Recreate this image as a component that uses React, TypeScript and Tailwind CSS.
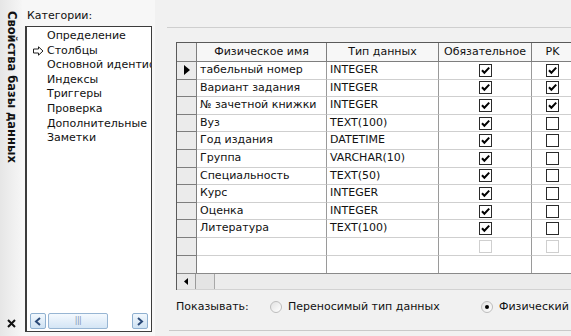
import React from "react";

type Row = { name: string; type: string; req: boolean; pk: boolean };

const rows: Row[] = [
  { name: "табельный номер", type: "INTEGER", req: true, pk: true },
  { name: "Вариант задания", type: "INTEGER", req: true, pk: true },
  { name: "№ зачетной книжки", type: "INTEGER", req: true, pk: true },
  { name: "Вуз", type: "TEXT(100)", req: true, pk: false },
  { name: "Год издания", type: "DATETIME", req: true, pk: false },
  { name: "Группа", type: "VARCHAR(10)", req: true, pk: false },
  { name: "Специальность", type: "TEXT(50)", req: true, pk: false },
  { name: "Курс", type: "INTEGER", req: true, pk: false },
  { name: "Оценка", type: "INTEGER", req: true, pk: false },
  { name: "Литература", type: "TEXT(100)", req: true, pk: false },
];

const categories = [
  "Определение",
  "Столбцы",
  "Основной идентиф",
  "Индексы",
  "Триггеры",
  "Проверка",
  "Дополнительные",
  "Заметки",
];

const cols = "grid grid-cols-[20px_130px_112px_93px_41px]";

function CheckBox({ checked, faint }: { checked?: boolean; faint?: boolean }) {
  return (
    <span
      className={
        "w-[13px] h-[13px] border bg-white flex items-center justify-center " +
        (faint ? "border-[#cfcfcf]" : "border-[#2a2a2a]")
      }
    >
      {checked && (
        <svg width="11" height="11" viewBox="0 0 11 11">
          <path d="M2 5.2 L4.4 7.8 L9.2 2.6" fill="none" stroke="#000" strokeWidth="2" />
        </svg>
      )}
    </span>
  );
}

function Radio({ selected }: { selected?: boolean }) {
  return (
    <span className="w-[12px] h-[12px] rounded-full border border-[#bdbdbd] bg-gradient-to-br from-[#e2e2e2] to-white flex items-center justify-center">
      {selected && <span className="w-[4px] h-[4px] rounded-full bg-black" />}
    </span>
  );
}

function HollowArrow() {
  return (
    <svg width="11" height="10" viewBox="0 0 11 10">
      <path
        d="M0.5 3 H5.5 V0.8 L10 5 L5.5 9.2 V7 H0.5 Z"
        fill="white"
        stroke="#202020"
        strokeWidth="1"
      />
    </svg>
  );
}

function VistaButton({ dir }: { dir: "left" | "right" }) {
  return (
    <div className="w-[16px] h-[16px] rounded-[2px] border border-[#8fb0d0] bg-gradient-to-b from-[#f2f8fd] to-[#cfe2f3] flex items-center justify-center">
      <svg width="8" height="9" viewBox="0 0 8 9">
        <path
          d={dir === "left" ? "M6 1 L2 4.5 L6 8" : "M2 1 L6 4.5 L2 8"}
          fill="none"
          stroke="#2b4a78"
          strokeWidth="2"
        />
      </svg>
    </div>
  );
}

export default function App() {
  return (
    <div className="w-[571px] h-[336px] overflow-hidden flex bg-[#f1f1f1] font-['DejaVu_Sans',sans-serif] text-[11px] text-[#111]">
      {/* vertical pane title */}
      <div className="w-[22px] shrink-0 flex flex-col items-center justify-between bg-gradient-to-r from-[#e6e6e6] to-[#f6f6f6] pt-[11px] pb-[8px]">
        <span className="[writing-mode:vertical-rl] font-bold text-[11.5px] leading-none text-[#111] ml-[1px]">
          Свойства базы данных
        </span>
        <svg width="9" height="9" viewBox="0 0 9 9">
          <path d="M1 1 L8 8 M8 1 L1 8" stroke="#111" strokeWidth="2" />
        </svg>
      </div>

      {/* categories */}
      <div className="w-[133px] shrink-0 flex flex-col pl-[3px] pb-[4px] bg-[#f7f7f7]">
        <div className="h-[26px] flex items-center pl-[2px] pt-[7px] text-[11px]">Категории:</div>
        <div className="w-[127px] flex-1 border border-[#3c3c3c] border-l-2 bg-white flex flex-col justify-between pt-[2px]">
          <ul className="leading-[14.6px]">
            {categories.map((c, i) => (
              <li key={c} className="flex items-center whitespace-nowrap overflow-hidden">
                <span className="w-[20px] shrink-0 flex justify-end pr-[3px]">
                  {i === 1 && <HollowArrow />}
                </span>
                <span>{c}</span>
              </li>
            ))}
          </ul>
          <div className="h-[18px] mx-[3px] mb-[1px] flex items-center gap-[2px]">
            <VistaButton dir="left" />
            <div className="w-[60px] h-[16px] rounded-[2px] border border-[#97b5d3] bg-gradient-to-b from-[#f4f9fe] to-[#d4e5f5] flex items-center justify-center">
              <span className="text-[8px] leading-none text-[#7d97b3] tracking-[-0.5px]">|||</span>
            </div>
            <div className="flex-1" />
            <VistaButton dir="right" />
          </div>
        </div>
      </div>

      {/* columns panel */}
      <div className="flex-1 flex flex-col pt-[27px]">
        <div className="ml-[12px] h-[2px] border-t border-[#cfcfcf] border-b-white" />
        <div className="ml-[21px] mt-[13px] w-[400px] h-[248px] border-t border-l border-[#5a5a5a] flex flex-col bg-white overflow-hidden">
          {/* header */}
          <div className={cols + " h-[19px] bg-[#f7f7f7] shrink-0"}>
            <div className="bg-[#ececec] border-r border-b border-[#7e7e7e]" />
            <div className="border-r border-b border-[#7e7e7e] flex items-center justify-center">Физическое имя</div>
            <div className="border-r border-b border-[#7e7e7e] flex items-center justify-center">Тип данных</div>
            <div className="border-r border-b border-[#7e7e7e] flex items-center justify-center">Обязательное</div>
            <div className="border-b border-[#7e7e7e] flex items-center justify-center">PK</div>
          </div>
          {rows.map((r, i) => (
            <div key={r.name} className={cols + " h-[17.6px] shrink-0"}>
              <div className="bg-[#ebebeb] border-r border-b border-[#7e7e7e] flex items-center justify-center">
                {i === 0 && (
                  <svg width="6" height="10" viewBox="0 0 6 10">
                    <path d="M0 0 L6 5 L0 10 Z" fill="#000" />
                  </svg>
                )}
              </div>
              <div className="border-r border-b border-r-[#9a9a9a] border-b-[#cfcfcf] flex items-center pl-[3px] whitespace-nowrap overflow-hidden">
                {r.name}
              </div>
              <div className="border-r border-b border-r-[#9a9a9a] border-b-[#cfcfcf] flex items-center pl-[3px]">
                {r.type}
              </div>
              <div className="border-r border-b border-r-[#9a9a9a] border-b-[#cfcfcf] flex items-center justify-center">
                <CheckBox checked={r.req} />
              </div>
              <div className="border-b border-b-[#cfcfcf] flex items-center justify-center">
                <CheckBox checked={r.pk} />
              </div>
            </div>
          ))}
          {/* new row */}
          <div className={cols + " h-[17.6px] shrink-0"}>
            <div className="bg-[#ebebeb] border-r border-b border-[#7e7e7e]" />
            <div className="border-r border-b border-r-[#9a9a9a] border-b-[#cfcfcf]" />
            <div className="border-r border-b border-r-[#9a9a9a] border-b-[#cfcfcf]" />
            <div className="border-r border-b border-r-[#9a9a9a] border-b-[#cfcfcf] flex items-center justify-center">
              <CheckBox faint />
            </div>
            <div className="border-b border-b-[#cfcfcf] flex items-center justify-center">
              <CheckBox faint />
            </div>
          </div>
          <div className={cols + " flex-1"}>
            <div className="bg-[#ebebeb] border-r border-[#7e7e7e]" />
            <div className="border-r border-[#9a9a9a]" />
            <div className="border-r border-[#9a9a9a]" />
            <div className="border-r border-[#9a9a9a]" />
            <div />
          </div>
          {/* horizontal scrollbar */}
          <div className="h-[17px] shrink-0 flex bg-[#ececec] border-t border-[#8a8a8a] border-b border-b-[#d2d2d2]">
            <div className="w-[19px] bg-[#e8e8e8] border-r border-[#9a9a9a] flex items-center justify-center">
              <svg width="4" height="7" viewBox="0 0 4 7">
                <path d="M4 0 L0 3.5 L4 7 Z" fill="#000" />
              </svg>
            </div>
            <div className="w-[19px] bg-[#e4e4e4] border-r border-[#a8a8a8]" />
            <div className="flex-1" />
          </div>
        </div>

        {/* display options */}
        <div className="ml-[21px] mt-[8px] h-[18px] flex items-center whitespace-nowrap">
          <span className="w-[94px] shrink-0">Показывать:</span>
          <span className="w-[211px] shrink-0 flex items-center gap-[6px]">
            <Radio />
            Переносимый тип данных
          </span>
          <span className="flex items-center gap-[6px]">
            <Radio selected />
            Физический тип данных
          </span>
        </div>
        <div className="ml-[14px] mt-[14px] h-[2px] border-t border-[#c9c9c9] border-b-white" />
      </div>
    </div>
  );
}
